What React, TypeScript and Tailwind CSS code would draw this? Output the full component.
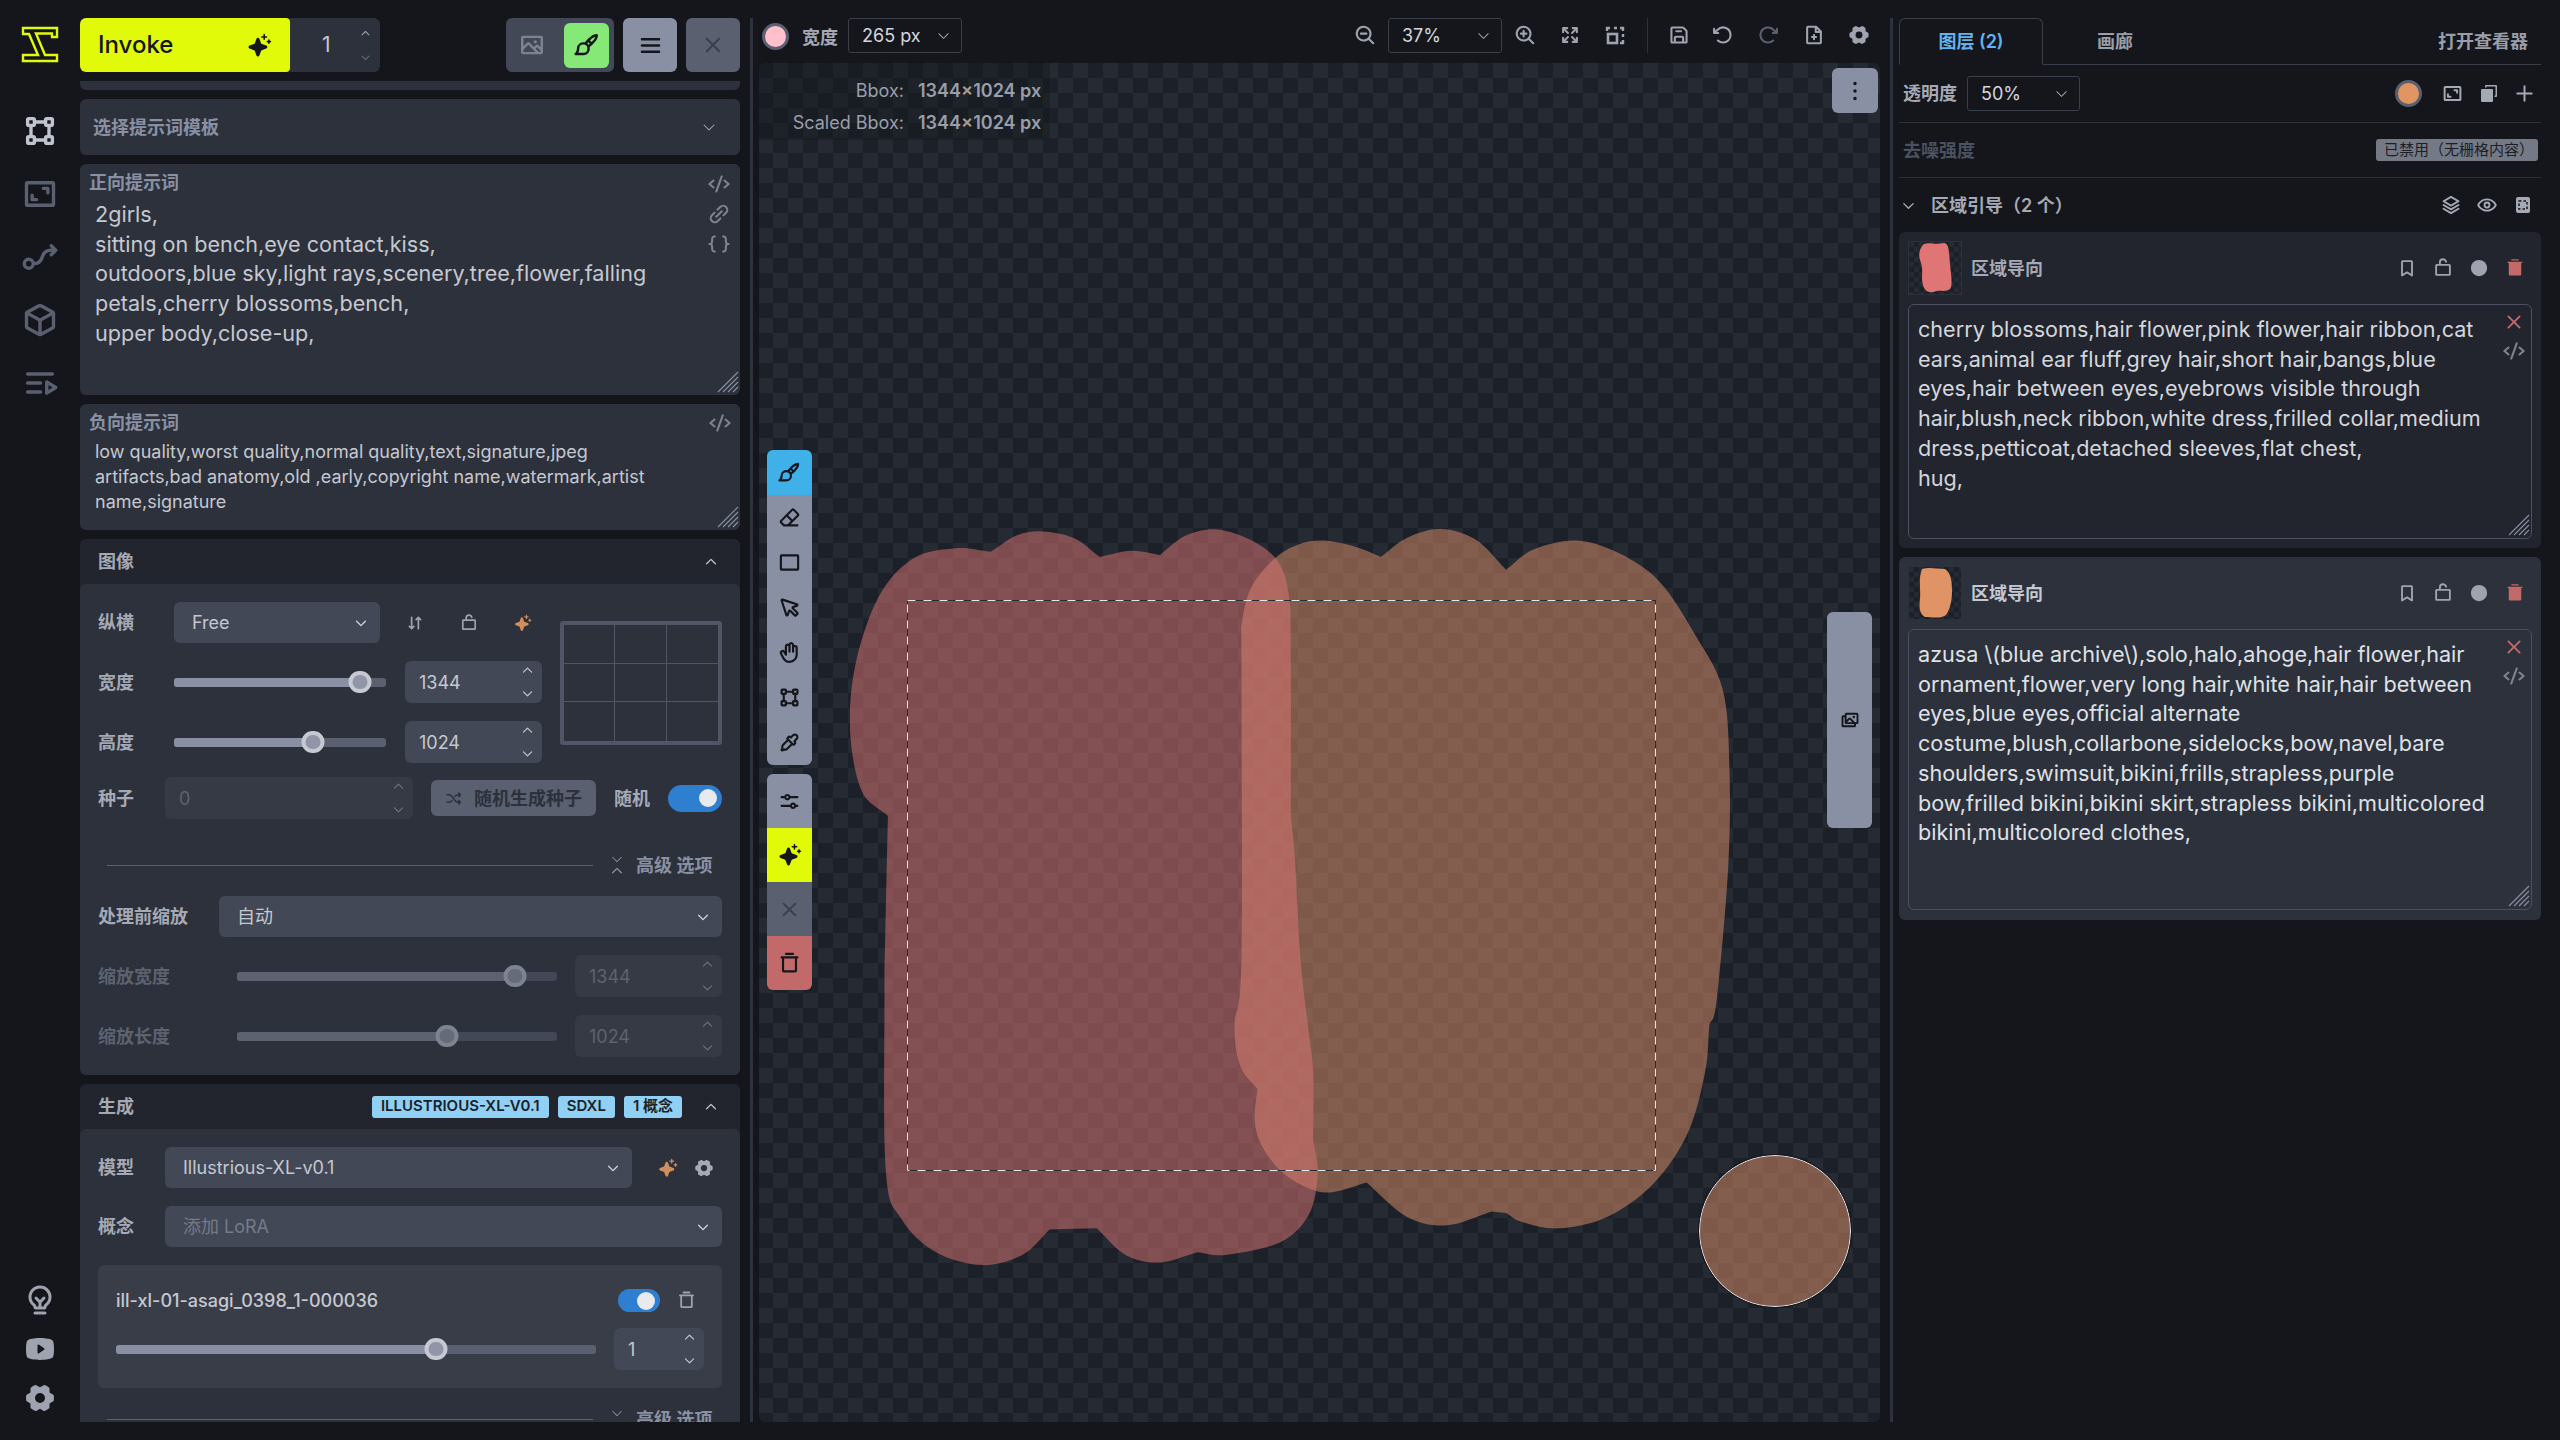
import React from "react";
import {
  PiSparkleFill, PiImageBold, PiPaintBrushBold, PiListBold, PiXBold, PiBoundingBoxBold, PiFrameCornersBold,
  PiFlowArrowBold, PiCubeBold, PiQueueBold, PiLightbulbFilamentBold, PiYoutubeLogoFill, PiGearSixFill,
  PiCodeBold, PiLinkSimpleBold, PiBracketsCurlyBold, PiArrowsDownUpBold, PiLockSimpleOpenBold, PiShuffleBold,
  PiCaretDownBold, PiCaretUpBold, PiCaretDown, PiBookmarkSimpleBold, PiCircleFill, PiTrashSimpleFill, PiTrashSimpleBold,
  PiStackBold, PiEyeBold, PiFloppyDiskBold, PiArrowCounterClockwiseBold, PiArrowClockwiseBold, PiFilePlusBold,
  PiMagnifyingGlassMinusBold, PiMagnifyingGlassPlusBold, PiArrowsOutBold, PiEraserBold,
  PiRectangleBold, PiCursorBold, PiHandBold, PiEyedropperBold, PiSlidersHorizontalBold, PiDotsThreeVerticalBold,
  PiImagesBold, PiPlusBold,
} from "react-icons/pi";

type P = [number, number, number?];

function smooth(pts: P[]) {
  const n = pts.length;
  let d = `M${pts[0][0]} ${pts[0][1]}`;
  for (let i = 0; i < n; i++) {
    const p0 = pts[(i - 1 + n) % n], p1 = pts[i], p2 = pts[(i + 1) % n], p3 = pts[(i + 2) % n];
    const c1 = p1[2] ? [p1[0] + (p2[0] - p1[0]) / 3, p1[1] + (p2[1] - p1[1]) / 3] : [p1[0] + (p2[0] - p0[0]) / 6, p1[1] + (p2[1] - p0[1]) / 6];
    const c2 = p2[2] ? [p2[0] - (p2[0] - p1[0]) / 3, p2[1] - (p2[1] - p1[1]) / 3] : [p2[0] - (p3[0] - p1[0]) / 6, p2[1] - (p3[1] - p1[1]) / 6];
    d += `C${c1[0].toFixed(1)} ${c1[1].toFixed(1)} ${c2[0].toFixed(1)} ${c2[1].toFixed(1)} ${p2[0]} ${p2[1]}`;
  }
  return d + "Z";
}

const RED: P[] = [[0,430],[10,300],[50,170],[110,95],[185,75],[245,82,1],[290,50],[335,42],[390,55],[435,92,1],[490,80],[540,88,1],[585,50],[640,38],[700,60],[745,100],[765,170],[768,300],[768,600,1],[775,680],[785,880],[800,1030],[807,1100],[807,1235,1],[815,1300],[800,1380],[750,1435],[655,1460],[605,1455,1],[540,1475],[480,1460],[430,1408,1],[348,1410,1],[300,1460],[230,1480],[150,1455],[90,1390],[62,1290],[60,900,1],[66,600,1],[20,550]];
const ORANGE: P[] = [[740,95],[780,68],[825,60],[880,72],[925,92,1],[970,55],[1030,37],[1090,58],[1143,117,1],[1190,78],[1265,60],[1340,85],[1410,140],[1470,240],[1520,350],[1532,500],[1530,700],[1510,960],[1497,1010,1],[1490,1100],[1460,1220],[1400,1320],[1320,1385],[1235,1408],[1170,1395],[1143,1378,1],[1118,1375,1],[1040,1402],[970,1385],[900,1318,1],[840,1337],[800,1330],[750,1295],[715,1240],[705,1190],[710,1135,1],[680,1090],[670,1010],[682,880],[682,300],[683,220],[700,150]];

function Logo() {
  return (
    <svg width="38" height="37" viewBox="0 0 38 37" fill="none" stroke="#e1fa0a" strokeWidth="2.4">
      <path d="M2 2H36V11H31V7.500H15L24 29H36V35H2V29H17L8 8H2Z" />
    </svg>
  );
}

function FitIcon() {
  return (
    <svg width="22" height="22" viewBox="0 0 22 22" fill="none" stroke="currentColor" strokeWidth="2.4">
      <path d="M3 7V4H6M10 4H13M16 4H19V7M19 10V13M19 16V19H16" />
      <rect x="4" y="10" width="9" height="9" strokeWidth="2.600" />
    </svg>
  );
}

function CopyIcon({ size = 21 }: { size?: number }) {
  return (
    <svg width={size} height={size} viewBox="0 0 21 21" fill="currentColor">
      <path d="M8 2H18A1 1 0 0 1 19 3V13A1 1 0 0 1 18 14H16.500V12.500H17.500V3.500H8.500V4.500H7V3A1 1 0 0 1 8 2Z" />
      <rect x="3" y="6" width="12" height="13" rx="1" />
    </svg>
  );
}

function SelectionIcon() {
  return (
    <svg width="20" height="20" viewBox="0 0 20 20">
      <rect x="3" y="2" width="14" height="16" rx="2" fill="currentColor" />
      <path d="M6 6H14V14H6Z" fill="none" stroke="#14161c" strokeWidth="1.500" strokeDasharray="2.500 2" />
    </svg>
  );
}

function Spin({ size = 14, dim = false }: { size?: number; dim?: boolean }) {
  return (
    <div className={`flex flex-col gap-[10px] ${dim ? "text-[#6b7080]" : "text-[#c0c4cf]"}`}>
      <PiCaretUpBold size={size} />
      <PiCaretDownBold size={size} />
    </div>
  );
}

function NumBox({ value, w, dim = false, bg = "bg-[#434856]" }: { value: string; w: string; dim?: boolean; bg?: string }) {
  return (
    <div className={`${w} ${dim ? "bg-[#363a45] text-[#5d6270]" : `${bg} text-[#c5c8d0]`} h-[42px] rounded-md flex items-center justify-between pl-[14px] pr-[8px] text-[18px] shrink-0`}>
      <span>{value}</span>
      <Spin size={13} dim={dim} />
    </div>
  );
}

function Slider({ pct, dim = false }: { pct: number; dim?: boolean }) {
  return (
    <div className={`relative flex-1 h-[9px] rounded-[3px] ${dim ? "bg-[#434856]" : "bg-[#5a6070]"}`}>
      <div className={`h-full rounded-[3px] ${dim ? "bg-[#5d6270]" : "bg-[#8a90a3]"}`} style={{ width: `${pct}%` }} />
      <div
        className={`absolute top-1/2 -translate-x-1/2 -translate-y-1/2 w-[23px] h-[22px] rounded-full border-[4px] ${dim ? "border-[#7e8390] bg-[#666b79]" : "border-[#c6c9d2] bg-[#9096a8]"}`}
        style={{ left: `${pct}%` }}
      />
    </div>
  );
}

function Label({ children, w, dim = false }: { children: React.ReactNode; w: string; dim?: boolean }) {
  return <div className={`${w} shrink-0 text-[18px] font-semibold ${dim ? "text-[#5d6270]" : "text-[#a5a9b5]"}`}>{children}</div>;
}

function Select({ text, className, dim = false }: { text: string; className: string; dim?: boolean }) {
  return (
    <div className={`${className} h-[41px] rounded-md bg-[#434856] flex items-center justify-between pl-[18px] pr-[12px] text-[18px] ${dim ? "text-[#757a88]" : "text-[#c5c8d0]"}`}>
      <span>{text}</span>
      <PiCaretDownBold size={14} className="text-[#d4d6dd]" />
    </div>
  );
}

function Toggle({ w, h }: { w: string; h: string }) {
  return (
    <div className={`${w} ${h} rounded-full bg-[#2f7fd0] flex items-center justify-end pr-[5px] shrink-0`}>
      <div className="w-[18px] h-[18px] rounded-full bg-[#e8eaee]" />
    </div>
  );
}

function Advanced() {
  return (
    <div className="flex items-center h-[20px] pl-[9px]">
      <div className="w-[486px] h-[1px] bg-[#5a6070]" />
      <div className="flex flex-col ml-[17px] text-[#8a90a3] -space-y-[2px]">
        <PiCaretDown size={14} />
        <PiCaretUpBold size={14} />
      </div>
      <div className="ml-[12px] text-[18px] font-semibold text-[#8a90a3] whitespace-pre">高级 选项</div>
    </div>
  );
}

function Resize({ color = "#8a90a3" }: { color?: string }) {
  return (
    <svg width="22" height="22" viewBox="0 0 22 22" stroke={color} strokeWidth="1.100" className="absolute right-[1px] bottom-[2px]">
      <path d="M21 1L1 21M21 6L6 21M21 11L11 21M21 16L16 21" />
    </svg>
  );
}

function Lines({ lines }: { lines: string[] }) {
  return <>{lines.map((l) => <div key={l} className="whitespace-nowrap">{l}</div>)}</>;
}

function Badge({ children }: { children: React.ReactNode }) {
  return <div className="h-[22px] px-[9px] rounded-[3px] bg-[#90d0f4] text-[#1c1f27] text-[15px] font-semibold flex items-center whitespace-nowrap">{children}</div>;
}

function ImageSection() {
  return (
    <div className="rounded-md bg-[#22252d] shrink-0">
      <div className="h-[45px] flex items-center justify-between px-[18px]">
        <span className="text-[18px] font-semibold text-[#a5a9b5]">图像</span>
        <PiCaretUpBold size={14} className="text-[#c0c4cf] mr-[4px]" />
      </div>
      <div className="rounded-md bg-[#2d313b] px-[18px] pt-[18px] pb-[18px]">
        <div className="flex gap-[18px]">
          <div className="w-[444px] flex flex-col gap-[18px]">
            <div className="flex items-center h-[41px]">
              <Label w="w-[76px]">纵横</Label>
              <Select text="Free" className="w-[206px]" />
              <div className="flex gap-[36px] ml-[26px] text-[#9fa3af]">
                <PiArrowsDownUpBold size={18} />
                <PiLockSimpleOpenBold size={18} />
                <PiSparkleFill size={18} className="text-[#d08f5c]" />
              </div>
            </div>
            <div className="flex items-center">
              <Label w="w-[76px]">宽度</Label>
              <Slider pct={87.5} />
              <div className="w-[19px]" />
              <NumBox value="1344" w="w-[137px]" />
            </div>
            <div className="flex items-center">
              <Label w="w-[76px]">高度</Label>
              <Slider pct={65.5} />
              <div className="w-[19px]" />
              <NumBox value="1024" w="w-[137px]" />
            </div>
          </div>
          <div className="mt-[19px] w-[162px] h-[124px] border-[4px] border-[#505666] rounded-[3px] grid grid-cols-3 grid-rows-3">
            {Array.from({ length: 9 }).map((_, i) => (
              <div key={i} className={`${i % 3 < 2 ? "border-r border-r-[#505666]" : ""} ${i < 6 ? "border-b border-b-[#505666]" : ""}`} />
            ))}
          </div>
        </div>
        <div className="flex items-center mt-[14px]">
          <Label w="w-[67px]">种子</Label>
          <NumBox value="0" w="w-[248px]" dim />
          <div className="ml-[18px] w-[165px] h-[36px] rounded-md bg-[#5a6070] text-[#2d313b] flex items-center justify-center gap-[12px] text-[18px] font-semibold">
            <PiShuffleBold size={17} />
            <span>随机生成种子</span>
          </div>
          <div className="ml-[18px] w-[54px] text-[18px] font-semibold text-[#a5a9b5]">随机</div>
          <Toggle w="w-[54px]" h="h-[27px]" />
        </div>
        <div className="mt-[36px]"><Advanced /></div>
        <div className="flex items-center mt-[21px]">
          <Label w="w-[121px]">处理前缩放</Label>
          <Select text="自动" className="flex-1" />
        </div>
        <div className="flex items-center mt-[18px]">
          <Label w="w-[139px]" dim>缩放宽度</Label>
          <Slider pct={87} dim />
          <div className="w-[18px]" />
          <NumBox value="1344" w="w-[147px]" dim />
        </div>
        <div className="flex items-center mt-[18px]">
          <Label w="w-[139px]" dim>缩放长度</Label>
          <Slider pct={65.5} dim />
          <div className="w-[18px]" />
          <NumBox value="1024" w="w-[147px]" dim />
        </div>
      </div>
    </div>
  );
}

function GenSection() {
  return (
    <div className="rounded-t-md bg-[#22252d] shrink-0">
      <div className="h-[45px] flex items-center px-[18px]">
        <span className="text-[18px] font-semibold text-[#a5a9b5]">生成</span>
        <div className="ml-auto flex gap-[9px]">
          <Badge>ILLUSTRIOUS-XL-V0.1</Badge>
          <Badge>SDXL</Badge>
          <Badge>1 概念</Badge>
        </div>
        <PiCaretUpBold size={14} className="text-[#c0c4cf] ml-[22px] mr-[4px]" />
      </div>
      <div className="rounded-t-md bg-[#2d313b] px-[18px] pt-[18px] pb-[18px] flex flex-col">
        <div className="flex items-center">
          <Label w="w-[67px]">模型</Label>
          <Select text="Illustrious-XL-v0.1" className="w-[467px]" />
          <PiSparkleFill size={20} className="ml-[26px] text-[#d08f5c]" />
          <PiGearSixFill size={20} className="ml-[16px] text-[#a5a9b5]" />
        </div>
        <div className="flex items-center mt-[18px]">
          <Label w="w-[67px]">概念</Label>
          <Select text="添加 LoRA" className="flex-1" dim />
        </div>
        <div className="mt-[18px] h-[123px] rounded-md bg-[#393d48] px-[18px] pt-[24px]">
          <div className="flex items-center h-[23px]">
            <span className="text-[18px] font-medium text-[#c5c8d0]">ill-xl-01-asagi_0398_1-000036</span>
            <div className="ml-auto"><Toggle w="w-[42px]" h="h-[23px]" /></div>
            <PiTrashSimpleBold size={19} className="ml-[17px] mr-[8px] text-[#9fa3af]" />
          </div>
          <div className="flex items-center mt-[16px]">
            <Slider pct={66.7} />
            <div className="w-[18px]" />
            <NumBox value="1" w="w-[90px]" bg="bg-[#434856]" />
          </div>
        </div>
        <div className="mt-[21px]"><Advanced /></div>
      </div>
    </div>
  );
}

function LeftPanel() {
  return (
    <div className="w-[660px] shrink-0 flex flex-col overflow-hidden">
      <div className="flex h-[54px] shrink-0">
        <div className="w-[210px] rounded-l-md rounded-r-sm bg-[#e1fa0a] text-[#14161c] flex items-center justify-between pl-[18px] pr-[18px]">
          <span className="text-[24px] font-medium">Invoke</span>
          <PiSparkleFill size={25} />
        </div>
        <div className="w-[90px] rounded-r-md bg-[#2d313b] flex items-center justify-between pl-[32px] pr-[9px] text-[21px] text-[#c5c8d0]">
          <span>1</span>
          <div className="flex flex-col gap-[13px] text-[#9fa3af]"><PiCaretUpBold size={11} /><PiCaretDownBold size={11} className="opacity-50" /></div>
        </div>
        <div className="ml-[126px] w-[108px] rounded-md bg-[#434856] flex items-center p-[5px]">
          <div className="w-[53px] flex justify-start pl-[8px] text-[#7e8390]"><PiImageBold size={26} /></div>
          <div className="w-[45px] h-[45px] rounded-md bg-[#86e877] text-[#14161c] flex items-center justify-center"><PiPaintBrushBold size={26} /></div>
        </div>
        <div className="ml-[9px] w-[54px] rounded-md bg-[#8a90a3] text-[#14161c] flex items-center justify-center"><PiListBold size={25} /></div>
        <div className="ml-[9px] w-[54px] rounded-md bg-[#5a6070] text-[#3a3f4b] flex items-center justify-center"><PiXBold size={22} /></div>
      </div>
      <div className="mt-[9px] flex-1 min-h-0 overflow-hidden flex flex-col gap-[9px]">
        <div className="h-[9px] shrink-0 rounded-b-md bg-[#2d313b]" />
        <div className="h-[56px] shrink-0 rounded-md bg-[#2d313b] flex items-center justify-between pl-[13px] pr-[23px]">
          <span className="text-[18px] font-semibold text-[#8a90a3]">选择提示词模板</span>
          <PiCaretDown size={16} className="text-[#a5a9b5]" />
        </div>
        <div className="relative h-[231px] shrink-0 rounded-md bg-[#2d313b] pl-[15px]">
          <div className="absolute left-[9px] top-[5px] text-[18px] font-semibold text-[#8a90a3]">正向提示词</div>
          <div className="pt-[36px] text-[21.600px] leading-[29.700px] text-[#c5c8d0]">
            <Lines lines={["2girls,", "sitting on bench,eye contact,kiss,", "outdoors,blue sky,light rays,scenery,tree,flower,falling", "petals,cherry blossoms,bench,", "upper body,close-up,"]} />
          </div>
          <div className="absolute right-[10px] top-[9px] flex flex-col gap-[8px] text-[#7e8390]">
            <PiCodeBold size={22} />
            <PiLinkSimpleBold size={22} />
            <PiBracketsCurlyBold size={22} />
          </div>
          <Resize />
        </div>
        <div className="relative h-[126px] shrink-0 rounded-md bg-[#2d313b] pl-[15px]">
          <div className="absolute left-[9px] top-[5px] text-[18px] font-semibold text-[#8a90a3]">负向提示词</div>
          <div className="pt-[35px] text-[18px] leading-[25px] text-[#c5c8d0]">
            <Lines lines={["low quality,worst quality,normal quality,text,signature,jpeg", "artifacts,bad anatomy,old ,early,copyright name,watermark,artist", "name,signature"]} />
          </div>
          <div className="absolute right-[9px] top-[8px] text-[#7e8390]"><PiCodeBold size={22} /></div>
          <Resize />
        </div>
        <ImageSection />
        <GenSection />
      </div>
    </div>
  );
}

function Rail() {
  const dim = "text-[#5a6070]";
  return (
    <div className="w-[80px] shrink-0 flex flex-col items-center">
      <div className="h-[54px] mt-[8px]"><Logo /></div>
      <div className="mt-[33px] flex flex-col items-center gap-[27px]">
        <PiBoundingBoxBold size={36} className="text-[#c0c4cf]" />
        <PiFrameCornersBold size={36} className={dim} />
        <PiFlowArrowBold size={36} className={dim} />
        <PiCubeBold size={36} className={dim} />
        <PiQueueBold size={36} className={dim} />
      </div>
      <div className="mt-auto mb-[8px] flex flex-col items-center gap-[17px] text-[#9fa3af]">
        <PiLightbulbFilamentBold size={32} />
        <PiYoutubeLogoFill size={32} />
        <PiGearSixFill size={32} />
      </div>
    </div>
  );
}

function ToolBtn({ children, className = "bg-[#8a90a3]", h = "h-[45px]" }: { children: React.ReactNode; className?: string; h?: string }) {
  return <div className={`${h} ${className} flex items-center justify-center text-[#14161c]`}>{children}</div>;
}

function Canvas() {
  return (
    <div className="relative flex-1 rounded-md overflow-hidden bg-[repeating-conic-gradient(#1c2028_0%_25%,#262a33_0%_50%)] bg-[length:30px_30px] bg-[position:14px_0px]">
      <svg viewBox="0 0 1568 1568" preserveAspectRatio="none" width="900" height="800" className="absolute left-[91px] top-[447px]">
        <path d={smooth(ORANGE)} fill="#e0916a" opacity="0.5" />
        <path d={smooth(RED)} fill="#e07575" opacity="0.5" />
      </svg>
      <svg width="749" height="571" className="absolute left-[148px] top-[537px]" fill="none">
        <rect x="0.500" y="0.500" width="748" height="570" stroke="#2a2c33" />
        <rect x="0.500" y="0.500" width="748" height="570" stroke="#e4e6ea" strokeDasharray="8 8" />
      </svg>
      <div className="absolute left-[940px] top-[1092px] w-[152px] h-[152px] rounded-full border-[1.500px] border-[#e8eaee] bg-[#e0916a]/50 outline outline-1 outline-[#14161c]" />
      <div className="absolute left-0 top-0 w-[291px] h-[77px] rounded-br-md bg-[#14161c]/40 text-[18px] text-[#9a9ea9] grid grid-cols-[145px_1fr] gap-x-[14px] pt-[13px] leading-[30px] text-right">
        <span>Bbox:</span><span className="text-left font-semibold">1344×1024 px</span>
        <span>Scaled Bbox:</span><span className="text-left font-semibold">1344×1024 px</span>
      </div>
      <div className="absolute right-[2px] top-[5px] w-[46px] h-[45px] rounded-md bg-[#8a90a3] flex items-center justify-center text-[#14161c]"><PiDotsThreeVerticalBold size={28} /></div>
      <div className="absolute left-[8px] top-[387px] w-[45px] flex flex-col gap-[9px]">
        <div className="rounded-md overflow-hidden">
          <ToolBtn className="bg-[#3fb0e8]"><PiPaintBrushBold size={23} /></ToolBtn>
          <ToolBtn><PiEraserBold size={23} /></ToolBtn>
          <ToolBtn><PiRectangleBold size={23} /></ToolBtn>
          <ToolBtn><PiCursorBold size={23} /></ToolBtn>
          <ToolBtn><PiHandBold size={23} /></ToolBtn>
          <ToolBtn><PiBoundingBoxBold size={23} /></ToolBtn>
          <ToolBtn><PiEyedropperBold size={23} /></ToolBtn>
        </div>
        <div className="rounded-md overflow-hidden">
          <ToolBtn h="h-[54px]"><PiSlidersHorizontalBold size={23} /></ToolBtn>
          <ToolBtn h="h-[54px]" className="bg-[#e1fa0a]"><PiSparkleFill size={24} /></ToolBtn>
          <ToolBtn h="h-[54px]" className="bg-[#5a6070]"><span className="text-[#3a3f4b]"><PiXBold size={21} /></span></ToolBtn>
          <ToolBtn h="h-[54px]" className="bg-[#c26a6a]"><PiTrashSimpleBold size={23} /></ToolBtn>
        </div>
      </div>
      <div className="absolute right-[8px] top-[549px] w-[45px] h-[216px] rounded-md bg-[#8a90a3] flex items-center justify-center text-[#14161c]"><PiImagesBold size={20} /></div>
    </div>
  );
}

function TopSelect({ text, className }: { text: string; className: string }) {
  return (
    <div className={`${className} h-[35px] rounded-[3px] border border-[#3a3e49] flex items-center justify-between pl-[13px] pr-[10px] text-[18px] text-[#d4d6dd]`}>
      <span>{text}</span>
      <PiCaretDown size={15} className="text-[#a5a9b5]" />
    </div>
  );
}

function Center() {
  const ic = "text-[#9fa3af]";
  return (
    <div className="w-[1121px] shrink-0 flex flex-col">
      <div className="h-[45px] shrink-0 flex items-start">
        <div className="mt-[5px] ml-[3px] w-[27px] h-[27px] rounded-full bg-[#ffc0cb] border-[3px] border-[#5a6070]" />
        <span className="ml-[13px] mt-[6px] text-[18px] font-semibold text-[#a5a9b5]">宽度</span>
        <TopSelect text="265 px" className="ml-[10px] w-[114px]" />
        <div className="ml-auto flex items-start">
          <PiMagnifyingGlassMinusBold size={22} className={`${ic} mt-[6px] mr-[12px]`} />
          <TopSelect text="37%" className="w-[114px]" />
          <PiMagnifyingGlassPlusBold size={22} className={`${ic} mt-[6px] ml-[12px]`} />
          <PiArrowsOutBold size={22} className={`${ic} mt-[6px] ml-[23px]`} />
          <div className={`${ic} mt-[6px] ml-[23px]`}><FitIcon /></div>
          <div className="w-[1px] h-[35px] bg-[#2d313b] ml-[21px]" />
          <PiFloppyDiskBold size={22} className={`${ic} mt-[6px] ml-[20px]`} />
          <PiArrowCounterClockwiseBold size={22} className={`${ic} mt-[6px] ml-[22px]`} />
          <PiArrowClockwiseBold size={22} className="text-[#5a6070] mt-[6px] ml-[23px]" />
          <PiFilePlusBold size={22} className={`${ic} mt-[6px] ml-[24px]`} />
          <PiGearSixFill size={22} className={`${ic} mt-[6px] ml-[23px] mr-[10px]`} />
        </div>
      </div>
      <Canvas />
    </div>
  );
}

function RegionCard({ selected, color, lines, shape, h, taH }: { selected: boolean; color: string; lines: string[]; shape: string; h: string; taH: string }) {
  return (
    <div className={`${h} rounded-md px-[9px] pt-[9px] ${selected ? "bg-[#2d313b]" : "bg-[#22252d]"}`}>
      <div className="flex items-center h-[54px]">
        <div className="w-[54px] h-[54px] border border-[#2d313b] bg-[repeating-conic-gradient(#1c2028_0%_25%,#262a33_0%_50%)] bg-[length:10px_10px] flex items-center justify-center">
          <svg width="36" height="52" viewBox="0 0 36 52"><path d={shape} fill={color} /></svg>
        </div>
        <span className={`ml-[9px] text-[18px] font-semibold ${selected ? "text-[#c5c8d0]" : "text-[#a5a9b5]"}`}>区域导向</span>
        <div className="ml-auto flex gap-[16px] pr-[7px] text-[#9fa3af]">
          <PiBookmarkSimpleBold size={20} />
          <PiLockSimpleOpenBold size={20} />
          <PiCircleFill size={20} />
          <PiTrashSimpleFill size={20} className="text-[#c26a6a]" />
        </div>
      </div>
      <div className={`relative ${taH} mt-[9px] rounded-md border border-[#4b5160] pl-[9px] pt-[10px] text-[21.600px] leading-[29.700px] ${selected ? "text-[#dfe1e6]" : "text-[#d4d6dd]"}`}>
        <Lines lines={lines} />
        <PiXBold size={20} className="absolute right-[7px] top-[7px] text-[#c26a6a]" />
        <PiCodeBold size={22} className="absolute right-[6px] top-[35px] text-[#7e8390]" />
        <Resize />
      </div>
    </div>
  );
}

function Right() {
  return (
    <div className="w-[642px] shrink-0 flex flex-col">
      <div className="h-[47px] shrink-0 flex border-b border-[#3a3e49]">
        <div className="w-[144px] h-[47px] rounded-t-md border border-[#3a3e49] border-b-[#14161c] flex items-center justify-center text-[18px] font-semibold text-[#63b3ed]">图层 (2)</div>
        <div className="w-[144px] flex items-center justify-center text-[18px] font-semibold text-[#9a9ea9]">画廊</div>
        <div className="ml-auto pr-[13px] flex items-center text-[18px] font-semibold text-[#9a9ea9]">打开查看器</div>
      </div>
      <div className="h-[58px] shrink-0 flex items-center border-b border-[#2d313b] pl-[4px]">
        <span className="text-[18px] font-semibold text-[#a5a9b5]">透明度</span>
        <TopSelect text="50%" className="ml-[10px] w-[113px]" />
        <div className="ml-auto flex items-center gap-[15px] pr-[6px] text-[#a5a9b5]">
          <div className="w-[27px] h-[27px] rounded-full bg-[#e09562] border-[3px] border-[#5a6070] mr-[5px]" />
          <PiFrameCornersBold size={21} />
          <CopyIcon />
          <PiPlusBold size={21} />
        </div>
      </div>
      <div className="h-[55px] shrink-0 flex items-center justify-between border-b border-[#2d313b] pl-[4px] pr-[3px]">
        <span className="text-[18px] font-semibold text-[#4b5160]">去噪强度</span>
        <div className="h-[22px] w-[162px] rounded-[3px] bg-[#747986] text-[#1c1f27] text-[15px] flex items-center pl-[8px] whitespace-nowrap">已禁用（无栅格内容）</div>
      </div>
      <div className="h-[54px] shrink-0 flex items-center pl-[2px]">
        <PiCaretDownBold size={15} className="text-[#a5a9b5]" />
        <span className="ml-[15px] text-[18px] font-semibold text-[#a5a9b5]">区域引导（2 个）</span>
        <div className="ml-auto flex gap-[16px] pr-[8px] text-[#a5a9b5]">
          <PiStackBold size={20} />
          <PiEyeBold size={20} />
          <SelectionIcon />
        </div>
      </div>
      <div className="flex flex-col gap-[9px]">
        <RegionCard
          selected={false}
          color="#e07575"
          shape="M7 2C12 0 18 3 27 1C32 1 32 10 33 22C34 32 36 44 33 47C27 51 22 47 17 50C9 51 6 47 5 38C5 30 6 26 3 18C1 12 3 5 7 2Z"
          h="h-[316px]"
          taH="h-[235px]"
          lines={["cherry blossoms,hair flower,pink flower,hair ribbon,cat", "ears,animal ear fluff,grey hair,short hair,bangs,blue", "eyes,hair between eyes,eyebrows visible through", "hair,blush,neck ribbon,white dress,frilled collar,medium", "dress,petticoat,detached sleeves,flat chest,", "hug,"]}
        />
        <RegionCard
          selected
          color="#e09365"
          shape="M5 2C12 0 20 2 28 2C34 6 35 14 35 24C35 34 33 42 29 48C24 52 15 50 8 50C2 46 2 40 3 32C4 22 1 12 5 2Z"
          h="h-[363px]"
          taH="h-[281px]"
          lines={["azusa \\(blue archive\\),solo,halo,ahoge,hair flower,hair", "ornament,flower,very long hair,white hair,hair between", "eyes,blue eyes,official alternate", "costume,blush,collarbone,sidelocks,bow,navel,bare", "shoulders,swimsuit,bikini,frills,strapless,purple", "bow,frilled bikini,bikini skirt,strapless bikini,multicolored", "bikini,multicolored clothes,"]}
        />
      </div>
    </div>
  );
}

export default function App() {
  return (
    <div className="w-[2560px] h-[1440px] overflow-hidden bg-[#14161c] flex py-[18px] [font-family:Inter,'Noto_Sans_CJK_SC',sans-serif]">
      <Rail />
      <LeftPanel />
      <div className="ml-[10px] mr-[6px] w-[3px] shrink-0 bg-[#2d313b]" />
      <Center />
      <div className="ml-[10px] mr-[6px] w-[3px] shrink-0 bg-[#2d313b]" />
      <Right />
    </div>
  );
}
